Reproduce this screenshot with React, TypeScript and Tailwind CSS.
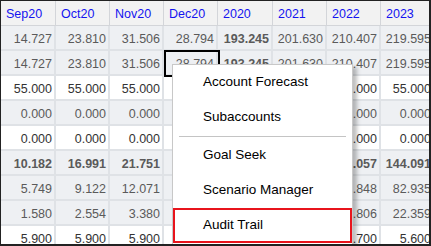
import React from 'react'

const headers = ['Sep20', 'Oct20', 'Nov20', 'Dec20', '2020', '2021', '2022', '2023']
const widths = ['w-[55px]', 'w-[54px]', 'w-[54px]', 'w-[54px]', 'w-[55px]', 'w-[54px]', 'w-[54px]', 'w-[54px]']

type Row = { values: string[]; shaded: boolean; bold?: boolean }

const rows: Row[] = [
    { values: ['14.727', '23.810', '31.506', '28.794', '193.245', '201.630', '210.407', '219.595'], shaded: true },
    { values: ['14.727', '23.810', '31.506', '28.794', '193.245', '201.630', '210.407', '219.595'], shaded: true },
    { values: ['55.000', '55.000', '55.000', '55.000', '55.000', '55.000', '55.000', '55.000'], shaded: false },
    { values: ['0.000', '0.000', '0.000', '0.000', '0.000', '0.000', '0.000', '0.000'], shaded: true },
    { values: ['0.000', '0.000', '0.000', '0.000', '0.000', '0.000', '0.000', '0.000'], shaded: false },
    { values: ['10.182', '16.991', '21.751', '25.133', '120.057', '128.100', '136.057', '144.091'], shaded: true, bold: true },
    { values: ['5.749', '9.122', '12.071', '14.200', '70.115', '74.001', '78.848', '82.935'], shaded: true },
    { values: ['1.580', '2.554', '3.380', '3.900', '19.210', '20.120', '21.806', '22.359'], shaded: true },
    { values: ['5.900', '5.900', '5.900', '5.900', '5.800', '5.750', '5.700', '5.600'], shaded: false },
]

const menu = ['Account Forecast', 'Subaccounts', '-', 'Goal Seek', 'Scenario Manager', 'Audit Trail']

export default function App() {
    return (
        <div className="relative w-[431px] h-[246px] overflow-hidden bg-white border border-[#222] border-r-2 border-b-2 font-['Liberation_Sans',Arial,sans-serif]">
            <div className="flex h-[25px] bg-[#f2f2f2]">
                {headers.map((h, i) => (
                    <div key={h} className={`${widths[i]} shrink-0 border-r border-b border-[#d3d5d9] pl-[5px] pt-[4px] text-[12.5px] text-[#1414f0]`}>
                        {h}
                    </div>
                ))}
            </div>
            {rows.map((r, ri) => (
                <div key={ri} className={`flex h-[25px] ${r.shaded ? 'bg-[#eef0f3]' : 'bg-white'}`}>
                    {r.values.map((v, i) => (
                        <div
                            key={i}
                            className={`${widths[i]} shrink-0 border-r-2 border-b-2 border-[#dfe2e6] pr-[2px] pt-[4px] text-right text-[12.5px] whitespace-nowrap ${r.shaded ? 'text-[#5a5a5a]' : 'text-[#333]'} ${r.bold || i === 4 ? 'font-bold' : ''}`}
                        >
                            {v}
                        </div>
                    ))}
                </div>
            ))}

            {/* selected cell */}
            <div className="absolute left-[163px] top-[49px] w-[56px] h-[27px] border-2 border-black" />

            {/* context menu */}
            <div className="absolute left-[171px] top-[63px] w-[181px] h-[200px] bg-white border border-[#c8c8c8] shadow-[4px_3px_4px_rgba(0,0,0,0.25)]">
                {menu.map((m) =>
                    m === '-' ? (
                        <div key="sep" className="mx-[6px] my-[1px] h-px bg-[#c4c4c4]" />
                    ) : (
                        <div
                            key={m}
                            className={`h-[35px] flex items-center text-[13.5px] text-black ${m === 'Audit Trail' ? 'border-2 border-[#e8141c] pl-[28px]' : 'pl-[30px]'}`}
                        >
                            {m}
                        </div>
                    ),
                )}
            </div>
        </div>
    )
}
